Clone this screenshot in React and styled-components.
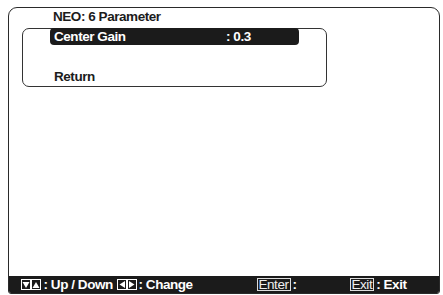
import React from "react";
import styled, { createGlobalStyle } from "styled-components";

const Global = createGlobalStyle`
  html, body { margin: 0; padding: 0; background: #fff; }
  body { width: 443px; height: 295px; overflow: hidden; }
`;

const font = `"Liberation Sans", Arial, sans-serif`;

const Screen = styled.div`
  width: 443px;
  height: 295px;
  box-sizing: border-box;
  padding: 7px 3px 1px 8px;
  background: #fff;
  font-family: ${font};
  font-weight: 700;
  font-size: 13.5px;
  letter-spacing: -0.45px;
`;

const Frame = styled.div`
  height: 100%;
  box-sizing: border-box;
  border: 1.5px solid #2a2a2a;
  border-radius: 9px 9px 3px 3px;
  display: flex;
  flex-direction: column;
  overflow: hidden;
`;

const Title = styled.div`
  height: 20px;
  padding-left: 44px;
  line-height: 18px;
  color: #1c1c1c;
`;

const MenuBox = styled.div`
  margin-left: 13px;
  width: 305px;
  height: 59px;
  box-sizing: border-box;
  border: 1.2px solid #333;
  border-radius: 7px;
  display: flex;
  flex-direction: column;
  justify-content: space-between;
`;

const Row = styled.div`
  height: 17px;
  display: flex;
  margin-left: 27px;
  &:first-child { margin-top: -1px; }
  &:last-child { margin-bottom: 1px; }
`;

const RowInner = styled.div`
  width: 249px;
  height: 17px;
  display: flex;
  align-items: center;
  box-sizing: border-box;
  padding-left: 4px;
  border-radius: 4px;
  background: ${(p) => (p.$active ? "#1b1b1b" : "transparent")};
  color: ${(p) => (p.$active ? "#fff" : "#1c1c1c")};
`;

const Label = styled.span`
  width: 172px;
`;

const Spacer = styled.div`
  flex: 1;
`;

const Bar = styled.div`
  height: 17px;
  background: #1b1b1b;
  color: #fff;
  display: flex;
  align-items: center;
  padding-left: 11.5px;
  white-space: nowrap;
`;

const KeyBox = styled.span`
  display: inline-flex;
  align-items: center;
  justify-content: center;
  width: 10px;
  height: 11px;
  border: 1px solid #fff;
  box-sizing: border-box;
  margin-right: 0.5px;
`;

const TextKey = styled.span`
  display: inline-flex;
  align-items: center;
  height: 13px;
  border: 1px solid #ddd;
  padding: 0 1px;
  box-sizing: border-box;
  line-height: 11px;
  color: #eee;
  font-weight: 400;
`;

const Item = styled.span`
  display: inline-flex;
  align-items: center;
  width: ${(p) => (p.$w ? `${p.$w}px` : "auto")};
`;

const Gap = styled.span`
  display: inline-block;
  width: ${(p) => p.$w}px;
`;

const Tri = ({ dir }) => {
  const pts = {
    down: "0.5,1.5 7.5,1.5 4,7.5",
    up: "0.5,7.5 7.5,7.5 4,1.5",
    left: "7,0.5 7,7.5 1.5,4",
    right: "1,0.5 1,7.5 6.5,4",
  }[dir];
  return (
    <svg width="8" height="9" viewBox="0 -0.5 8 9">
      <polygon points={pts} fill="#fff" />
    </svg>
  );
};

export default function App() {
  return (
    <>
      <Global />
      <Screen>
        <Frame>
          <Title>NEO: 6 Parameter</Title>
          <MenuBox>
            <Row>
              <RowInner $active>
                <Label>Center Gain</Label>
                <span>: 0.3</span>
              </RowInner>
            </Row>
            <Row>
              <RowInner>Return</RowInner>
            </Row>
          </MenuBox>
          <Spacer />
          <Bar>
            <Item $w={96}>
              <KeyBox><Tri dir="down" /></KeyBox>
              <KeyBox><Tri dir="up" /></KeyBox>
              <Gap $w={2} />: Up / Down
            </Item>
            <Item $w={140}>
              <KeyBox><Tri dir="left" /></KeyBox>
              <KeyBox><Tri dir="right" /></KeyBox>
              <Gap $w={1} />: Change
            </Item>
            <Item $w={93}>
              <TextKey>Enter</TextKey>
              <Gap $w={2} />:
            </Item>
            <Item>
              <TextKey>Exit</TextKey>
              <Gap $w={2} />: Exit
            </Item>
          </Bar>
        </Frame>
      </Screen>
    </>
  );
}
